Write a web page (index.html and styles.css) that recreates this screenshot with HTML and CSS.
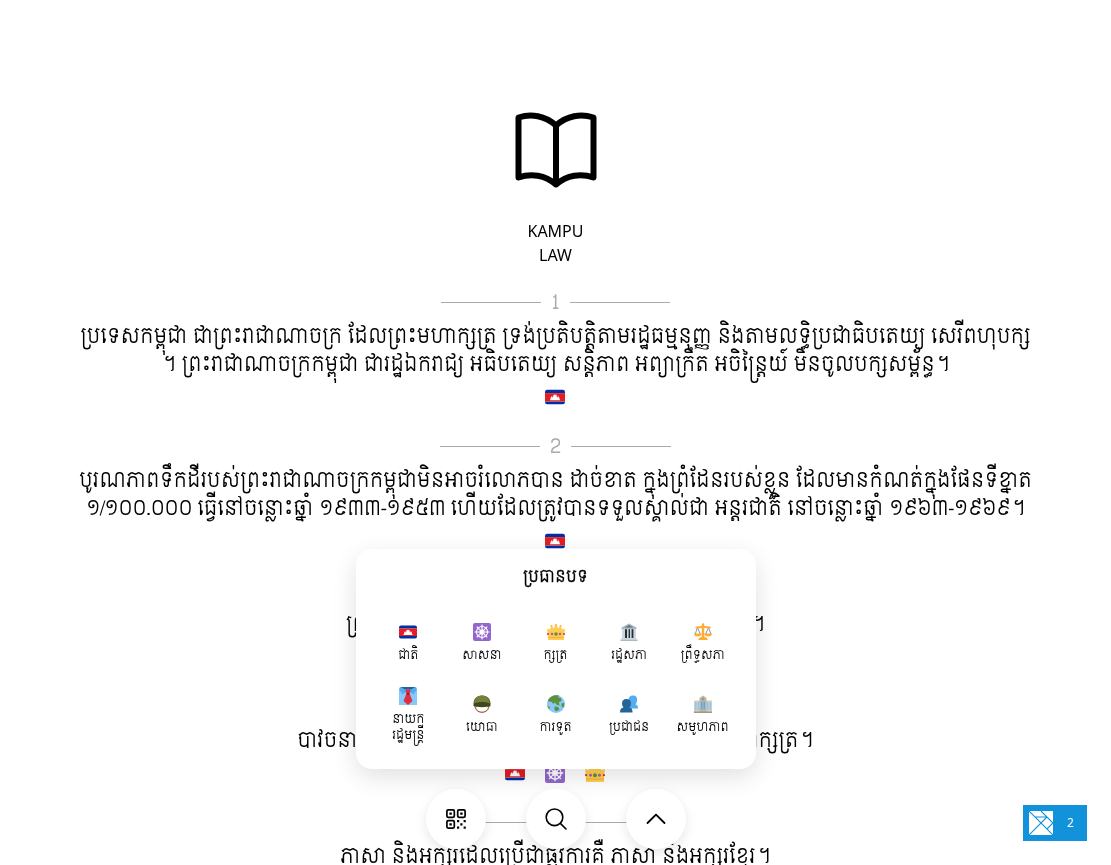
FILE: index.html
```
<!DOCTYPE html>
<html lang="km">
<head>
<meta charset="utf-8">
<title>Kampu Law</title>
<link rel="stylesheet" href="styles.css">
</head>
<body>
<svg class="sprite" aria-hidden="true">
  <symbol id="flag" viewBox="0 0 36 36"><path fill="#032EA1" d="M0 27a4 4 0 0 0 4 4h28a4 4 0 0 0 4-4v-1H0zM36 11V9a4 4 0 0 0-4-4H4a4 4 0 0 0-4 4v2z"/><path fill="#E31D26" d="M0 11h36v15H0z"/><path fill="#fff" d="M9 24v-2h1v-3h1v-2h2v2h1v-2h1v-3h2v1l1-2 1 2v-1h2v3h1v2h1v-2h2v2h1v3h1v2z"/></symbol>
  <symbol id="wheel" viewBox="0 0 36 36"><rect width="36" height="36" rx="4" fill="#9266CC"/><g fill="none" stroke="#fff" stroke-width="2.300"><circle cx="18" cy="18" r="11"/><circle cx="18" cy="18" r="4"/><path d="M18 3v30M3 18h30M7.400 7.400l21.200 21.200M28.600 7.400L7.400 28.600"/></g></symbol>
  <symbol id="crown" viewBox="0 0 36 36"><path fill="#F4900C" d="M2 27h32v6H2z"/><path fill="#FFCC4D" d="M2 28L0 11l6 2 3-8 4 6 5-8 5 8 4-6 3 8 6-2-2 17z"/><path fill="#FFCC4D" d="M2 26h32v8H2z"/><path fill="#FFAC33" d="M2 28h32v2H2z"/><g fill="#FFAC33"><circle cx="9" cy="6" r="2"/><circle cx="18" cy="4" r="2"/><circle cx="27" cy="6" r="2"/></g><circle cx="18" cy="22" r="3.500" fill="#5C913B"/><g fill="#9266CC"><circle cx="10" cy="22" r="2.600"/><circle cx="26" cy="22" r="2.600"/></g><g fill="#DD2E44"><circle cx="2" cy="22" r="2"/><circle cx="34" cy="22" r="2"/></g></symbol>
  <symbol id="temple" viewBox="0 0 36 36"><path fill="#AAB8C2" d="M18 1L3 9v3h30V9zM5 12h26v19H5z"/><path fill="#66757F" d="M18 4L9 9h18zM6 12h24v18H6z"/><path fill="#292F33" d="M10 13h4v17h-4zM17 13h3v17h-3zM23 13h4v17h-4z"/><path fill="#CCD6DD" d="M6 12h4v18H6zM14 12h3v18h-3zM20 12h3v18h-3zM27 12h3v18h-3zM3 30h30v3H3z"/><path fill="#AAB8C2" d="M1 33h34v3H1z"/></symbol>
  <symbol id="scales" viewBox="0 0 36 36"><g fill="none" stroke="#8899A6" stroke-width="2"><path d="M7 9L2 23M7 9l6 14M29 9l-6 14M29 9l5 14"/></g><path fill="#FFAC33" d="M15.500 3a2.500 2.500 0 0 1 5 0v3l11 1a2 2 0 0 1 0 4L20.500 10v18c4 0 7 2 7 6h-19c0-4 3-6 7-6V10L5 11a2 2 0 0 1 0-4l10.500-1zM0 21h15c0 4-3 6-7.500 6S0 25 0 21zM21 21h15c0 4-3 6-7.500 6S21 25 21 21z"/></symbol>
  <symbol id="tie" viewBox="0 0 36 36"><path fill="#88C9F9" d="M4 0h28a4 4 0 0 1 4 4v32H0V4a4 4 0 0 1 4-4z"/><path fill="#55ACEE" d="M4 0L0 5l7 10 11-9 11 9 7-10-4-5-14 5z"/><path fill="#269" d="M3 0h30l-9 5H12z"/><path fill="#DD2E44" d="M14 5h8l1 5-2 3 6 15-9 8-9-8 6-15-2-3z"/><path fill="#A0041E" d="M16 12h4l1 3h-6z"/></symbol>
  <symbol id="helmet" viewBox="0 0 36 36"><circle cx="18" cy="21" r="14" fill="#EFD1C3"/><path fill="#fff" d="M7 24h22c0 6-5 9-11 9S7 30 7 24z"/><path fill="none" stroke="#963B22" stroke-width="2" d="M4 22c1 8 6 12.500 14 12.500S31 30 32 22"/><path fill="#3E4A1E" d="M1 22C0 8 7 1 18 1s18 7 17 21c-5 3-29 3-34 0z"/><path fill="#75803A" d="M2 17C3 7 9 1 18 1s15 6 16 16c-9-4-23-4-32 0z"/></symbol>
  <symbol id="globe" viewBox="0 0 36 36"><circle cx="18" cy="18" r="18" fill="#88C9F9"/><path fill="#5C913B" d="M2 10C7 1 16-1 24 1l-2 4 6 1 1 6-5 2 1 7-5-1-4-5-4 3-2-4-7-1zM15 23l7 1 3 5-7 4-3-4zM29 17l6-1-2 9-4-2zM0 20l6 5-2 4z"/></symbol>
  <symbol id="people" viewBox="0 0 36 36"><path fill="#55ACEE" d="M17 10c0-6 3-9 9-9s9 4 8 10c0 4-2 6-3 8 4 1 5 3 5 8H20z"/><path fill="#269" d="M4 17c0-6 3-9 9-9s9 3 9 9c0 4-2 6-3 8 5 1 6 4 6 10H0c0-6 2-9 7-10-1-2-3-4-3-8z"/></symbol>
  <symbol id="building" viewBox="0 0 36 36"><path fill="#D9CDBD" d="M0 11h36v24H0z"/><path fill="#C1B4A0" d="M11 6l7-5 7 5v29H11z"/><path fill="#88C9F9" d="M2 14h3v16H2zM7 14h3v16H7zM26 14h3v16h-3zM31 14h3v16h-3z"/><path fill="#55ACEE" d="M14 13h2v16h-2zM17 13h2v16h-2zM20 13h2v16h-2z"/><circle cx="18" cy="8" r="2.500" fill="#8899A6"/><path fill="#A0978A" d="M0 33h36v3H0z"/></symbol>
</svg>
<main class="page">
  <header class="brand">
    <svg class="book" viewBox="0 0 100 100"><path fill="none" stroke="#000" stroke-width="6" stroke-linecap="round" stroke-linejoin="round" d="M50 25.500C39 15.500 25 13.500 12.500 17.500V77.500C25 73 39 75 50 84.500C61 75 75 73 87.500 77.500V17.500C75 13.500 61 15.500 50 25.500V84.500"/></svg>
    <h1 class="name">KAMPU<br>LAW</h1>
  </header>
  <article class="law"><div class="rule"><span>1</span></div>
    <p class="text"><span>ប្រទេសកម្ពុជា ជាព្រះរាជាណាចក្រ ដែលព្រះមហាក្សត្រ ទ្រង់ប្រតិបត្តិតាមរដ្ឋធម្មនុញ្ញ និងតាមលទ្ធិប្រជាធិបតេយ្យ សេរីពហុបក្ស</span><span>។ ព្រះរាជាណាចក្រកម្ពុជា ជារដ្ឋឯករាជ្យ អធិបតេយ្យ សន្តិភាព អព្យាក្រឹត អចិន្ត្រៃយ៍ មិនចូលបក្សសម្ព័ន្ធ។</span></p>
    <div class="tags"><svg><use href="#flag"/></svg></div></article>
  <article class="law"><div class="rule"><span>2</span></div>
    <p class="text"><span>បូរណភាពទឹកដីរបស់ព្រះរាជាណាចក្រកម្ពុជាមិនអាចរំលោភបាន ដាច់ខាត ក្នុងព្រំដែនរបស់ខ្លួន ដែលមានកំណត់ក្នុងផែនទីខ្នាត</span><span><b class="num scale">១/១០០.០០០</b> ធ្វើនៅចន្លោះឆ្នាំ <b class="num">១៩៣៣-១៩៥៣</b> ហើយដែលត្រូវបានទទួលស្គាល់ជា អន្តរជាតិ នៅចន្លោះឆ្នាំ <b class="num">១៩៦៣-១៩៦៩</b>។</span></p>
    <div class="tags"><svg><use href="#flag"/></svg></div></article>
  <article class="law"><div class="rule"><span>3</span></div>
    <p class="text"><span>ព្រះរាជាណាចក្រកម្ពុជា ជារដ្ឋដែលមិនអាចបំបែកបាន។</span></p>
    <div class="tags"><svg><use href="#flag"/></svg></div></article>
  <article class="law"><div class="rule"><span>4</span></div>
    <p class="text"><span>បាវចនានៃព្រះរាជាណាចក្រកម្ពុជាគឺ &nbsp;ជាតិ សាសនា ព្រះមហាក្សត្រ។</span></p>
    <div class="tags"><svg><use href="#flag"/></svg><svg><use href="#wheel"/></svg><svg><use href="#crown"/></svg></div></article>
  <article class="law"><div class="rule"><span>5</span></div>
    <p class="text"><span>ភាសា និងអក្សរដែលប្រើជាផ្លូវការគឺ ភាសា និងអក្សរខ្មែរ។</span></p></article>
</main>
<section class="panel">
  <h2 class="title">ប្រធានបទ</h2>
  <div class="grid">
    <a class="topic"><svg><use href="#flag"/></svg><span>ជាតិ</span></a>
    <a class="topic"><svg><use href="#wheel"/></svg><span>សាសនា</span></a>
    <a class="topic"><svg><use href="#crown"/></svg><span>ក្សត្រ</span></a>
    <a class="topic"><svg><use href="#temple"/></svg><span>រដ្ឋសភា</span></a>
    <a class="topic"><svg><use href="#scales"/></svg><span>ព្រឹទ្ធសភា</span></a>
    <a class="topic"><svg><use href="#tie"/></svg><span>នាយក<br>រដ្ឋមន្ត្រី</span></a>
    <a class="topic"><svg><use href="#helmet"/></svg><span>យោធា</span></a>
    <a class="topic"><svg><use href="#globe"/></svg><span>ការទូត</span></a>
    <a class="topic"><svg><use href="#people"/></svg><span>ប្រជាជន</span></a>
    <a class="topic"><svg><use href="#building"/></svg><span>សមូហភាព</span></a>
  </div>
</section>
<nav class="dock">
  <button class="round"><svg viewBox="0 0 24 24"><g fill="none" stroke="#000" stroke-width="1.700"><rect x="2.900" y="2.900" width="7.400" height="7.400" rx="1.300"/><rect x="13.700" y="2.900" width="7.400" height="7.400" rx="1.300"/><rect x="2.900" y="13.700" width="7.400" height="7.400" rx="1.300"/></g><path d="M5.400 5.400h2.400v2.400H5.400zM16.200 5.400h2.400v2.400h-2.400zM5.400 16.200h2.400v2.400H5.400zM13 13h2.200v2.200H13zM19.600 13h2.200v2.200h-2.200zM16.300 16.300h2.200v2.200h-2.200zM13 19.600h2.200v2.200H13zM19.600 19.600h2.200v2.200h-2.200z"/></svg></button>
  <button class="round"><svg viewBox="0 0 24 24"><path fill="none" stroke="#000" stroke-width="1.600" stroke-linecap="round" d="M16.600 16.600L22 22M18.800 10.300a8.300 8.300 0 1 1-16.600 0a8.300 8.300 0 0 1 16.600 0z"/></svg></button>
  <button class="round"><svg viewBox="0 0 24 24"><path fill="none" stroke="#000" stroke-width="1.800" stroke-linecap="round" stroke-linejoin="round" d="M3.500 16L12 7.700l8.500 8.300"/></svg></button>
</nav>
<aside class="badge"><svg viewBox="0 0 24 24"><path fill="#fff" d="M0 0h24v24H0z"/><path fill="none" stroke="#1292DB" stroke-width="1.100" d="M0 0l24 24M0 24L18 6M6 6h12M12 0l12 12M24 12l-6 6"/></svg><span>2</span></aside>
</body>
</html>
```
FILE: styles.css
```
* { box-sizing: border-box; }
body { margin: 0; height: 865px; overflow: hidden; background: #fff; color: #000; font-family: Siemreap, "Noto Sans", sans-serif; }
.sprite { position: absolute; width: 0; height: 0; }
.page { display: flex; flex-direction: column; align-items: center; padding-top: 100px; will-change: transform; }
.brand { display: flex; flex-direction: column; align-items: center; height: 188px; }
.book { width: 100px; height: 100px; }
.name { margin: 20px 0 0; font-size: 16px; line-height: 24px; font-weight: 400; text-align: center; }
.law { display: flex; flex-direction: column; align-items: center; width: 100%; }
.rule { display: flex; align-items: center; gap: 10px; height: 29px; margin-bottom: 6px; font-size: 20px; line-height: 29px; color: #aaa; }
.rule span { padding-top: 2px; }
.rule::before, .rule::after { content: ""; width: 100px; height: 1px; background: #aaa; }
.text { display: flex; flex-direction: column; align-items: center; margin: 0 0 8px; font-size: 20px; line-height: 28px; }
.text span { height: 28px; white-space: nowrap; }
.num { font-weight: 400; letter-spacing: -1px; }
.scale { letter-spacing: -1.200px; }
.tags { display: flex; gap: 20px; margin-bottom: 25px; padding-right: 1px; }
.tags svg { width: 20px; height: 20px; }
.panel { position: absolute; left: 356px; top: 549px; width: 400px; height: 220px; border-radius: 16px; background: #fff; box-shadow: 0 8px 24px rgba(0, 0, 0, .12); will-change: transform; }
.title { margin: 14px 0 0; font-size: 16px; line-height: 28px; font-weight: 600; text-align: center; padding-right: 1px; -webkit-text-stroke: .3px #000; }
.grid { display: grid; grid-template-columns: repeat(5, 73.600px); grid-template-rows: 64px 80px; align-items: center; justify-content: center; margin-top: 19.500px; padding-right: 1px; }
.topic { display: flex; flex-direction: column; align-items: center; gap: 6px; font-size: 12px; line-height: 16px; text-align: center; white-space: nowrap; }
.topic svg { width: 18px; height: 18px; }
.dock { position: absolute; left: 426px; top: 789px; display: flex; gap: 40px; }
.round { display: flex; align-items: center; justify-content: center; width: 60px; height: 60px; padding: 0; border: 0; border-radius: 50%; background: #fff; box-shadow: 0 4px 12px rgba(0, 0, 0, .1); }
.round svg { width: 24px; height: 24px; }
.badge { position: absolute; left: 1023px; top: 805px; display: flex; align-items: center; width: 64px; height: 36px; padding-left: 6px; gap: 14px; background: #1292db; color: #fff; font: 12px/36px "Noto Sans", sans-serif; will-change: transform; }
.badge svg { width: 24px; height: 24px; }
```
